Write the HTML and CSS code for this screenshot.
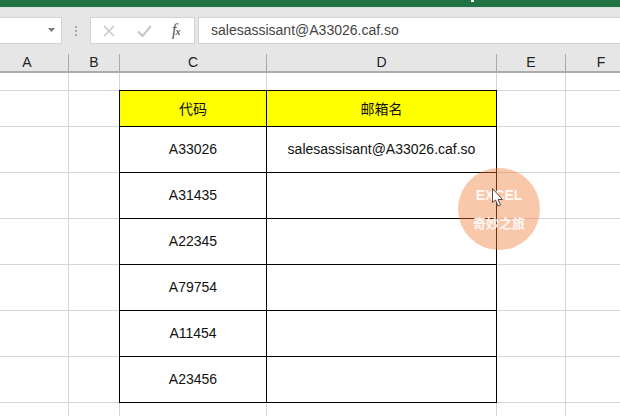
FILE: index.html
```html
<!DOCTYPE html>
<html lang="zh">
<head>
<meta charset="utf-8">
<title>Excel</title>
<link rel="stylesheet" href="styles.css">
</head>
<body>
<div class="titlebar"><span class="title-mark"></span></div>
<div class="formula-bar">
  <div class="name-box">
    <svg class="name-caret" width="8" height="5" viewBox="0 0 8 5"><path d="M0 0h7L3.500 4z" fill="#777"/></svg>
  </div>
  <div class="grip"><i></i><i></i><i></i></div>
  <div class="fx-buttons">
    <svg class="fx-icon" width="12" height="12" viewBox="0 0 12 12"><path d="M1 1l10 10M11 1L1 11" stroke="#c8c8c8" stroke-width="1.500" fill="none"/></svg>
    <svg class="fx-icon check" width="15" height="12" viewBox="0 0 15 12"><path d="M1 6.500l4.500 4.500L14 1" stroke="#c8c8c8" stroke-width="2.200" fill="none"/></svg>
    <span class="fx-label">f<span class="fx-x">x</span></span>
  </div>
  <div class="formula-input">salesassisant@A33026.caf.so</div>
</div>
<div class="sheet">
  <div class="col-head col-a">A</div><div class="col-head">B</div><div class="col-head">C</div><div class="col-head">D</div><div class="col-head">E</div><div class="col-head col-f">F</div>

  <div class="cell"></div><div class="cell"></div><div class="cell"></div><div class="cell"></div><div class="cell"></div><div class="cell"></div>

  <div class="cell"></div><div class="cell"></div><div class="box head first">代码</div><div class="box head">邮箱名</div><div class="cell"></div><div class="cell"></div>
  <div class="cell"></div><div class="cell"></div><div class="box first">A33026</div><div class="box">salesassisant@A33026.caf.so</div><div class="cell"></div><div class="cell"></div>
  <div class="cell"></div><div class="cell"></div><div class="box first">A31435</div><div class="box"></div><div class="cell"></div><div class="cell"></div>
  <div class="cell"></div><div class="cell"></div><div class="box first">A22345</div><div class="box"></div><div class="cell"></div><div class="cell"></div>
  <div class="cell"></div><div class="cell"></div><div class="box first">A79754</div><div class="box"></div><div class="cell"></div><div class="cell"></div>
  <div class="cell"></div><div class="cell"></div><div class="box first">A11454</div><div class="box"></div><div class="cell"></div><div class="cell"></div>
  <div class="cell"></div><div class="cell"></div><div class="box first">A23456</div><div class="box"></div><div class="cell"></div><div class="cell"></div>
  <div class="cell"></div><div class="cell"></div><div class="cell"></div><div class="cell"></div><div class="cell"></div><div class="cell"></div>
</div>
<div class="badge">
  <span class="badge-en">EXCEL</span>
  <span class="badge-cn">奇妙之旅</span>
</div>
<svg class="cursor" width="12" height="20" viewBox="0 0 12 20"><path d="M.5.500v14l3-2.500 2.500 6 2.500-1-2.500-5.500h4.500z" fill="#fff" stroke="#5a4a44" stroke-width="1"/></svg>
</body>
</html>
```

FILE: styles.css
```css
* { box-sizing: border-box; }
html, body { margin: 0; padding: 0; }
body {
  width: 620px;
  height: 416px;
  overflow: hidden;
  position: relative;
  background: #fff;
  font-family: "Liberation Sans", "Noto Sans CJK SC", sans-serif;
  color: #111;
}
.titlebar {
  height: 8px;
  background: #217346;
  border-bottom: 1px solid #e0e0e0;
  position: relative;
}
.title-mark {
  position: absolute;
  left: 471px;
  top: 0;
  width: 3px;
  height: 2px;
  background: #fff;
}
.formula-bar {
  height: 46px;
  background: #e6e6e6;
  padding-top: 9px;
  display: flex;
  align-items: flex-start;
}
.name-box {
  width: 62px;
  height: 27px;
  background: #fff;
  border: 1px solid #d2d2d2;
  border-left: 0;
  display: flex;
  align-items: center;
  justify-content: flex-end;
  padding-right: 5px;
}
.grip {
  width: 28px;
  height: 27px;
  display: flex;
  flex-direction: column;
  align-items: center;
  justify-content: center;
  gap: 2px;
}
.grip i {
  width: 2px;
  height: 2px;
  background: #aaa;
}
.fx-buttons {
  width: 105px;
  height: 27px;
  background: #fff;
  border: 1px solid #d2d2d2;
  display: flex;
  align-items: center;
  padding-left: 12px;
}
.fx-icon { display: block; }
.check { margin-left: 22px; }
.fx-label {
  margin-left: 20px;
  font-family: "Liberation Serif", serif;
  font-style: italic;
  font-size: 16px;
  line-height: 14px;
  color: #555;
}
.fx-x {
  font-size: 10px;
  font-weight: 700;
  margin-left: -1px;
}
.formula-input {
  margin-left: 3px;
  flex: 1;
  height: 27px;
  background: #fff;
  border: 1px solid #d2d2d2;
  border-right: 0;
  padding-left: 12px;
  font-size: 14px;
  line-height: 25px;
  color: #444;
}
.sheet {
  display: grid;
  grid-template-columns: 69px 51px 147px 230px 69px 70px;
  grid-template-rows: 19px 18px 36px repeat(6, 46px) 14px;
}
.col-head {
  background: #e6e6e6;
  border-right: 1px solid #ababab;
  border-bottom: 2px solid #ababab;
  font-size: 14px;
  line-height: 17px;
  text-align: center;
  color: #222;
}
.col-a { padding-right: 14px; }
.col-f { border-right: 0; }
.cell {
  border-right: 1px solid #d4d4dc;
  border-bottom: 1px solid #d4d4dc;
}
.box {
  border-right: 1px solid #000;
  border-bottom: 1px solid #000;
  display: flex;
  align-items: center;
  justify-content: center;
  padding-bottom: 1px;
  font-size: 14px;
  color: #111;
}
.box.first { border-left: 1px solid #000; margin-left: -1px; }
.head {
  background: #ff0;
  border-top: 1px solid #000;
  margin-top: -1px;
}
.badge {
  position: absolute;
  left: 458px;
  top: 168px;
  width: 82px;
  height: 82px;
  border-radius: 50%;
  background: rgba(240, 125, 55, 0.42);
  color: rgba(255, 255, 255, 0.9);
  font-weight: 700;
  text-align: center;
}
.badge-en {
  position: absolute;
  left: 0;
  right: 0;
  top: 19px;
  font-size: 14px;
  line-height: 16px;
}
.badge-cn {
  position: absolute;
  left: 0;
  right: 0;
  top: 48px;
  font-size: 13px;
  line-height: 16px;
}
.cursor {
  position: absolute;
  left: 492px;
  top: 188px;
}
```
